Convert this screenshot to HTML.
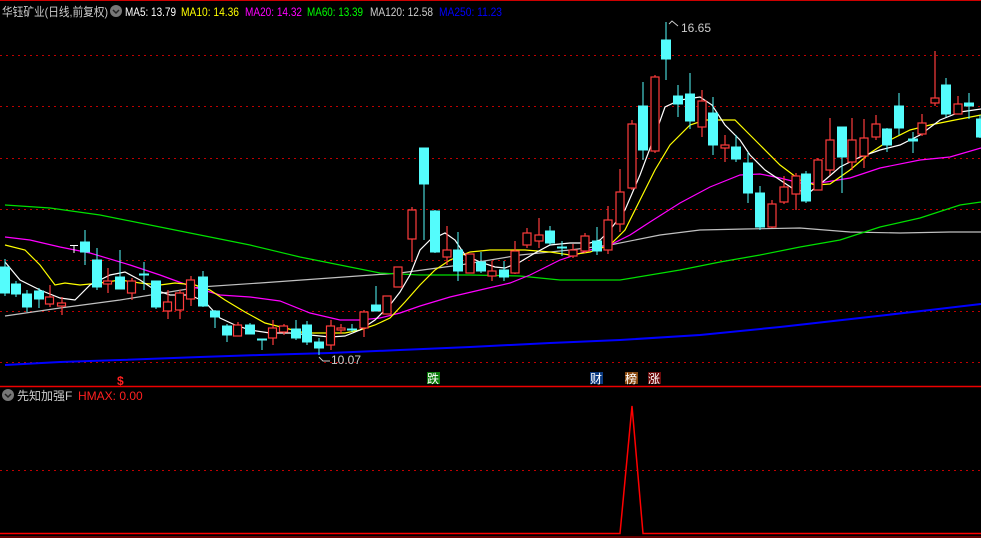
<!DOCTYPE html>
<html><head><meta charset="utf-8"><style>
html,body{margin:0;padding:0;background:#000;width:981px;height:538px;overflow:hidden}
svg{display:block}
text{font-family:"Liberation Sans","Noto Sans CJK SC",sans-serif}
</style></head><body>
<svg width="981" height="538" viewBox="0 0 981 538">
<rect width="981" height="538" fill="#000"/>
<line x1="0" y1="0.5" x2="981" y2="0.5" stroke="#c00" stroke-width="1"/>
<g stroke="#c00000" stroke-dasharray="2,4" stroke-width="1">
<line x1="0" y1="55.5" x2="981" y2="55.5"/><line x1="0" y1="106.5" x2="981" y2="106.5"/>
<line x1="0" y1="158.5" x2="981" y2="158.5"/><line x1="0" y1="209.5" x2="981" y2="209.5"/>
<line x1="0" y1="260.5" x2="981" y2="260.5"/><line x1="0" y1="311.5" x2="981" y2="311.5"/>
<line x1="0" y1="362.5" x2="981" y2="362.5"/><line x1="0" y1="470.5" x2="981" y2="470.5"/>
</g>
<line x1="0" y1="386.5" x2="981" y2="386.5" stroke="#e00" stroke-width="1.5"/>
<g fill="none" stroke-width="1.2">
<polyline stroke="#0000ff" stroke-width="2" points="5,365 60,362 120,360 200,357 260,355 330,353 400,350 470,347 550,343 620,340 700,335 780,327 860,318 930,310 981,304"/>
<polyline stroke="#c0c0c0" points="5,316 60,308 120,300 200,287 260,283 330,278 400,273 460,265 520,255 570,250 610,245 660,235 700,230 745,229 800,228 850,232 900,233 950,232 981,232"/>
<polyline stroke="#00e000" points="5,205 50,208 100,215 150,225 200,235 250,245 300,257 340,265 380,273 420,275 470,275 520,276 560,280 620,280 680,270 720,262 760,255 800,247 840,240 880,227 920,218 960,205 981,202"/>
<polyline stroke="#ff00ff" points="5,237 30,240 60,247 90,253 130,265 160,275 190,286 220,295 250,297 280,301 310,313 340,320 360,320 380,318 400,313 420,306 450,297 480,290 510,283 530,275 560,260 590,250 610,245 630,235 650,222 680,203 710,187 740,175 760,174 780,178 800,183 820,183 850,178 880,168 920,160 950,157 981,148"/>
<polyline stroke="#ffff00" points="5,245 25,250 40,265 55,285 65,283 80,285 100,283 120,280 140,283 160,285 175,283 195,285 210,290 225,300 245,312 265,323 285,328 305,333 330,333 345,333 360,330 375,325 390,318 405,302 420,285 435,270 450,260 470,252 490,250 510,250 525,250 550,252 570,255 590,252 610,245 625,230 640,200 655,170 670,145 690,125 705,120 720,120 735,120 745,130 760,145 780,165 800,180 815,185 830,184 850,170 870,153 890,140 910,130 930,125 955,120 981,115"/>
<polyline stroke="#ffffff" points="5,262 20,280 40,290 60,298 75,300 90,285 110,275 125,272 140,280 155,290 170,295 190,295 205,302 220,318 235,325 250,330 270,333 290,333 310,335 330,337 345,336 360,330 375,320 390,305 400,292 410,275 420,250 430,240 445,233 455,240 465,255 480,262 495,267 505,268 520,262 535,253 550,245 570,243 590,243 600,240 610,230 625,210 640,175 655,135 665,107 680,100 700,97 712,105 725,125 740,140 750,155 765,170 780,180 795,190 810,192 825,180 840,167 860,157 880,150 900,145 920,135 940,120 960,112 981,109"/>
</g>
<g stroke="#54fcfc" fill="#54fcfc">
<line x1="5" y1="259" x2="5" y2="296"/><rect x="0.5" y="267" width="9" height="26"/>
<line x1="16" y1="281" x2="16" y2="297"/><rect x="11.5" y="284" width="9" height="10"/>
<line x1="27" y1="290" x2="27" y2="312"/><rect x="22.5" y="294" width="9" height="13"/>
<line x1="39" y1="288" x2="39" y2="308"/><rect x="34.5" y="291" width="9" height="8"/>
<line x1="85" y1="230" x2="85" y2="265"/><rect x="80.5" y="242" width="9" height="10"/>
<line x1="97" y1="248" x2="97" y2="290"/><rect x="92.5" y="260" width="9" height="27"/>
<line x1="120" y1="250" x2="120" y2="289"/><rect x="115.5" y="277" width="9" height="12"/>
<line x1="144" y1="262" x2="144" y2="290"/><rect x="139.5" y="274" width="9" height="1"/>
<line x1="156" y1="281" x2="156" y2="309"/><rect x="151.5" y="281" width="9" height="26"/>
<line x1="203" y1="271" x2="203" y2="307"/><rect x="198.5" y="277" width="9" height="29"/>
<line x1="215" y1="310" x2="215" y2="328"/><rect x="210.5" y="311" width="9" height="6"/>
<line x1="227" y1="324" x2="227" y2="342"/><rect x="222.5" y="326" width="9" height="9"/>
<line x1="250" y1="323" x2="250" y2="334"/><rect x="245.5" y="325" width="9" height="9"/>
<line x1="262" y1="340" x2="262" y2="350"/><rect x="257.5" y="339" width="9" height="1"/>
<line x1="296" y1="320" x2="296" y2="340"/><rect x="291.5" y="329" width="9" height="9"/>
<line x1="307" y1="321" x2="307" y2="345"/><rect x="302.5" y="325" width="9" height="17"/>
<line x1="319" y1="338" x2="319" y2="355"/><rect x="314.5" y="342" width="9" height="6"/>
<line x1="352" y1="324" x2="352" y2="332"/><rect x="347.5" y="329" width="9" height="1"/>
<line x1="376" y1="286" x2="376" y2="311"/><rect x="371.5" y="305" width="9" height="6"/>
<line x1="424" y1="148" x2="424" y2="240"/><rect x="419.5" y="148" width="9" height="36"/>
<line x1="435" y1="210" x2="435" y2="253"/><rect x="430.5" y="211" width="9" height="41"/>
<line x1="458" y1="232" x2="458" y2="281"/><rect x="453.5" y="250" width="9" height="21"/>
<line x1="481" y1="252" x2="481" y2="273"/><rect x="476.5" y="262" width="9" height="9"/>
<line x1="504" y1="261" x2="504" y2="281"/><rect x="499.5" y="270" width="9" height="7"/>
<line x1="550" y1="226" x2="550" y2="245"/><rect x="545.5" y="231" width="9" height="12"/>
<line x1="562" y1="241" x2="562" y2="256"/><rect x="557.5" y="247" width="9" height="1"/>
<line x1="597" y1="227" x2="597" y2="255"/><rect x="592.5" y="241" width="9" height="10"/>
<line x1="643" y1="82" x2="643" y2="160"/><rect x="638.5" y="106" width="9" height="44"/>
<line x1="666" y1="22" x2="666" y2="80"/><rect x="661.5" y="40" width="9" height="19"/>
<line x1="678" y1="85" x2="678" y2="117"/><rect x="673.5" y="96" width="9" height="8"/>
<line x1="690" y1="73" x2="690" y2="129"/><rect x="685.5" y="94" width="9" height="27"/>
<line x1="713" y1="97" x2="713" y2="155"/><rect x="708.5" y="113" width="9" height="32"/>
<line x1="736" y1="135" x2="736" y2="162"/><rect x="731.5" y="147" width="9" height="12"/>
<line x1="748" y1="152" x2="748" y2="203"/><rect x="743.5" y="163" width="9" height="30"/>
<line x1="760" y1="186" x2="760" y2="230"/><rect x="755.5" y="193" width="9" height="34"/>
<line x1="806" y1="171" x2="806" y2="203"/><rect x="801.5" y="174" width="9" height="27"/>
<line x1="842" y1="127" x2="842" y2="193"/><rect x="837.5" y="127" width="9" height="30"/>
<line x1="887" y1="128" x2="887" y2="152"/><rect x="882.5" y="129" width="9" height="16"/>
<line x1="899" y1="93" x2="899" y2="135"/><rect x="894.5" y="106" width="9" height="22"/>
<line x1="913" y1="132" x2="913" y2="153"/><rect x="908.5" y="139" width="9" height="2"/>
<line x1="946" y1="78" x2="946" y2="117"/><rect x="941.5" y="85" width="9" height="29"/>
<line x1="969" y1="93" x2="969" y2="119"/><rect x="964.5" y="103" width="9" height="3"/>
<line x1="980" y1="115" x2="980" y2="138"/><rect x="976.5" y="119" width="9" height="18"/>
</g>
<g stroke="#ff3c3c" fill="#000" stroke-width="1.2">
<line x1="50" y1="285" x2="50" y2="307"/><rect x="45.5" y="297" width="8" height="7"/>
<line x1="62" y1="297" x2="62" y2="315"/><rect x="57.5" y="303" width="8" height="3"/>
<line x1="108" y1="268" x2="108" y2="293"/><rect x="103.5" y="281" width="8" height="3"/>
<line x1="132" y1="278" x2="132" y2="300"/><rect x="127.5" y="281" width="8" height="12"/>
<line x1="168" y1="290" x2="168" y2="319"/><rect x="163.5" y="302" width="8" height="9"/>
<line x1="180" y1="290" x2="180" y2="319"/><rect x="175.5" y="293" width="8" height="17"/>
<line x1="191" y1="276" x2="191" y2="306"/><rect x="186.5" y="280" width="8" height="19"/>
<line x1="238" y1="322" x2="238" y2="336"/><rect x="233.5" y="325" width="8" height="11"/>
<line x1="273" y1="320" x2="273" y2="345"/><rect x="268.5" y="328" width="8" height="10"/>
<line x1="284" y1="324" x2="284" y2="335"/><rect x="279.5" y="326" width="8" height="6"/>
<line x1="331" y1="320" x2="331" y2="350"/><rect x="326.5" y="326" width="8" height="19"/>
<line x1="341" y1="324" x2="341" y2="334"/><rect x="337" y="328" width="8" height="2"/>
<line x1="364" y1="310" x2="364" y2="337"/><rect x="360" y="312" width="8" height="16"/>
<line x1="387" y1="296" x2="387" y2="314"/><rect x="383" y="296" width="8" height="18"/>
<line x1="398" y1="267" x2="398" y2="287"/><rect x="394" y="267" width="8" height="20"/>
<line x1="412" y1="207" x2="412" y2="262"/><rect x="408" y="210" width="8" height="29"/>
<line x1="447" y1="226" x2="447" y2="265"/><rect x="443" y="250" width="8" height="7"/>
<line x1="470" y1="254" x2="470" y2="273"/><rect x="466" y="254" width="8" height="19"/>
<line x1="492" y1="261" x2="492" y2="281"/><rect x="488" y="271" width="8" height="5"/>
<line x1="515" y1="241" x2="515" y2="274"/><rect x="511" y="251" width="8" height="22"/>
<line x1="527" y1="228" x2="527" y2="248"/><rect x="523" y="233" width="8" height="12"/>
<line x1="539" y1="218" x2="539" y2="248"/><rect x="535" y="235" width="8" height="6"/>
<line x1="573" y1="244" x2="573" y2="258"/><rect x="569" y="250" width="8" height="6"/>
<line x1="585" y1="233" x2="585" y2="253"/><rect x="581" y="236" width="8" height="15"/>
<line x1="608" y1="206" x2="608" y2="254"/><rect x="604" y="220" width="8" height="30"/>
<line x1="620" y1="169" x2="620" y2="232"/><rect x="616" y="192" width="8" height="32"/>
<line x1="632" y1="120" x2="632" y2="190"/><rect x="628" y="124" width="8" height="64"/>
<line x1="655" y1="75" x2="655" y2="153"/><rect x="651" y="77" width="8" height="74"/>
<line x1="702" y1="90" x2="702" y2="137"/><rect x="698" y="101" width="8" height="26"/>
<line x1="725" y1="135" x2="725" y2="162"/><rect x="721" y="145" width="8" height="3"/>
<line x1="772" y1="200" x2="772" y2="228"/><rect x="768" y="204" width="8" height="23"/>
<line x1="784" y1="176" x2="784" y2="204"/><rect x="780" y="187" width="8" height="15"/>
<line x1="796" y1="173" x2="796" y2="210"/><rect x="792" y="176" width="8" height="18"/>
<line x1="818" y1="158" x2="818" y2="190"/><rect x="814" y="160" width="8" height="30"/>
<line x1="830" y1="118" x2="830" y2="175"/><rect x="826" y="140" width="8" height="30"/>
<line x1="852" y1="118" x2="852" y2="170"/><rect x="848" y="140" width="8" height="22"/>
<line x1="864" y1="119" x2="864" y2="168"/><rect x="860" y="138" width="8" height="18"/>
<line x1="876" y1="115" x2="876" y2="140"/><rect x="872" y="124" width="8" height="13"/>
<line x1="922" y1="114" x2="922" y2="136"/><rect x="918" y="123" width="8" height="11"/>
<line x1="935" y1="51" x2="935" y2="106"/><rect x="931" y="98" width="8" height="5"/>
<line x1="958" y1="96" x2="958" y2="114"/><rect x="954" y="104" width="8" height="10"/>
</g>
<g stroke="#fff"><line x1="70" y1="245.5" x2="78" y2="245.5"/><line x1="74" y1="245" x2="74" y2="253"/></g>
<polyline points="669,24 672,21 678,26" fill="none" stroke="#ccc"/>
<text x="681" y="32" font-size="12" fill="#ccc">16.65</text>
<polyline points="319,357 323,361 330,361" fill="none" stroke="#ccc"/>
<text x="331" y="364" font-size="12" fill="#ccc">10.07</text>
<text x="2" y="16" font-size="12" fill="#ccc" textLength="106" lengthAdjust="spacingAndGlyphs">华钰矿业(日线,前复权)</text>
<circle cx="116" cy="11" r="6" fill="#777"/>
<polyline points="113,10 116,13 119,10" fill="none" stroke="#222" stroke-width="1.5"/>
<text x="125" y="16" font-size="12" fill="#fff" textLength="51" lengthAdjust="spacingAndGlyphs">MA5: 13.79</text>
<text x="181" y="16" font-size="12" fill="#ffff00" textLength="58" lengthAdjust="spacingAndGlyphs">MA10: 14.36</text>
<text x="245" y="16" font-size="12" fill="#ff00ff" textLength="57" lengthAdjust="spacingAndGlyphs">MA20: 14.32</text>
<text x="307" y="16" font-size="12" fill="#00ff00" textLength="56" lengthAdjust="spacingAndGlyphs">MA60: 13.39</text>
<text x="370" y="16" font-size="12" fill="#ccc" textLength="63" lengthAdjust="spacingAndGlyphs">MA120: 12.58</text>
<text x="439" y="16" font-size="12" fill="#0000ff" textLength="63" lengthAdjust="spacingAndGlyphs">MA250: 11.23</text>
<text x="117" y="385" font-size="12" font-weight="bold" fill="#ff2020">$</text>
<rect x="427" y="372" width="13" height="12" fill="#0a7a0a"/><text x="427" y="383" font-size="12" fill="#fff">跌</text>
<rect x="590" y="372" width="13" height="12" fill="#0b3a80"/><text x="590" y="383" font-size="12" fill="#fff">财</text>
<rect x="625" y="372" width="13" height="12" fill="#8a4a10"/><text x="625" y="383" font-size="12" fill="#fff">榜</text>
<rect x="648" y="372" width="13" height="12" fill="#6a0a0a"/><text x="648" y="383" font-size="12" fill="#fff">涨</text>
<circle cx="8" cy="395" r="6" fill="#777"/>
<polyline points="5,394 8,397 11,394" fill="none" stroke="#222" stroke-width="1.5"/>
<text x="17" y="400" font-size="12" fill="#ccc">先知加强F</text>
<text x="78" y="400" font-size="12" fill="#ff2020">HMAX: 0.00</text>
<polyline points="0,533.5 620,533.5 632,406 643,533.5 981,533.5" fill="none" stroke="#ff0000" stroke-width="1.5"/>
<line x1="0" y1="537" x2="981" y2="537" stroke="#c00"/>
</svg>
</body></html>
